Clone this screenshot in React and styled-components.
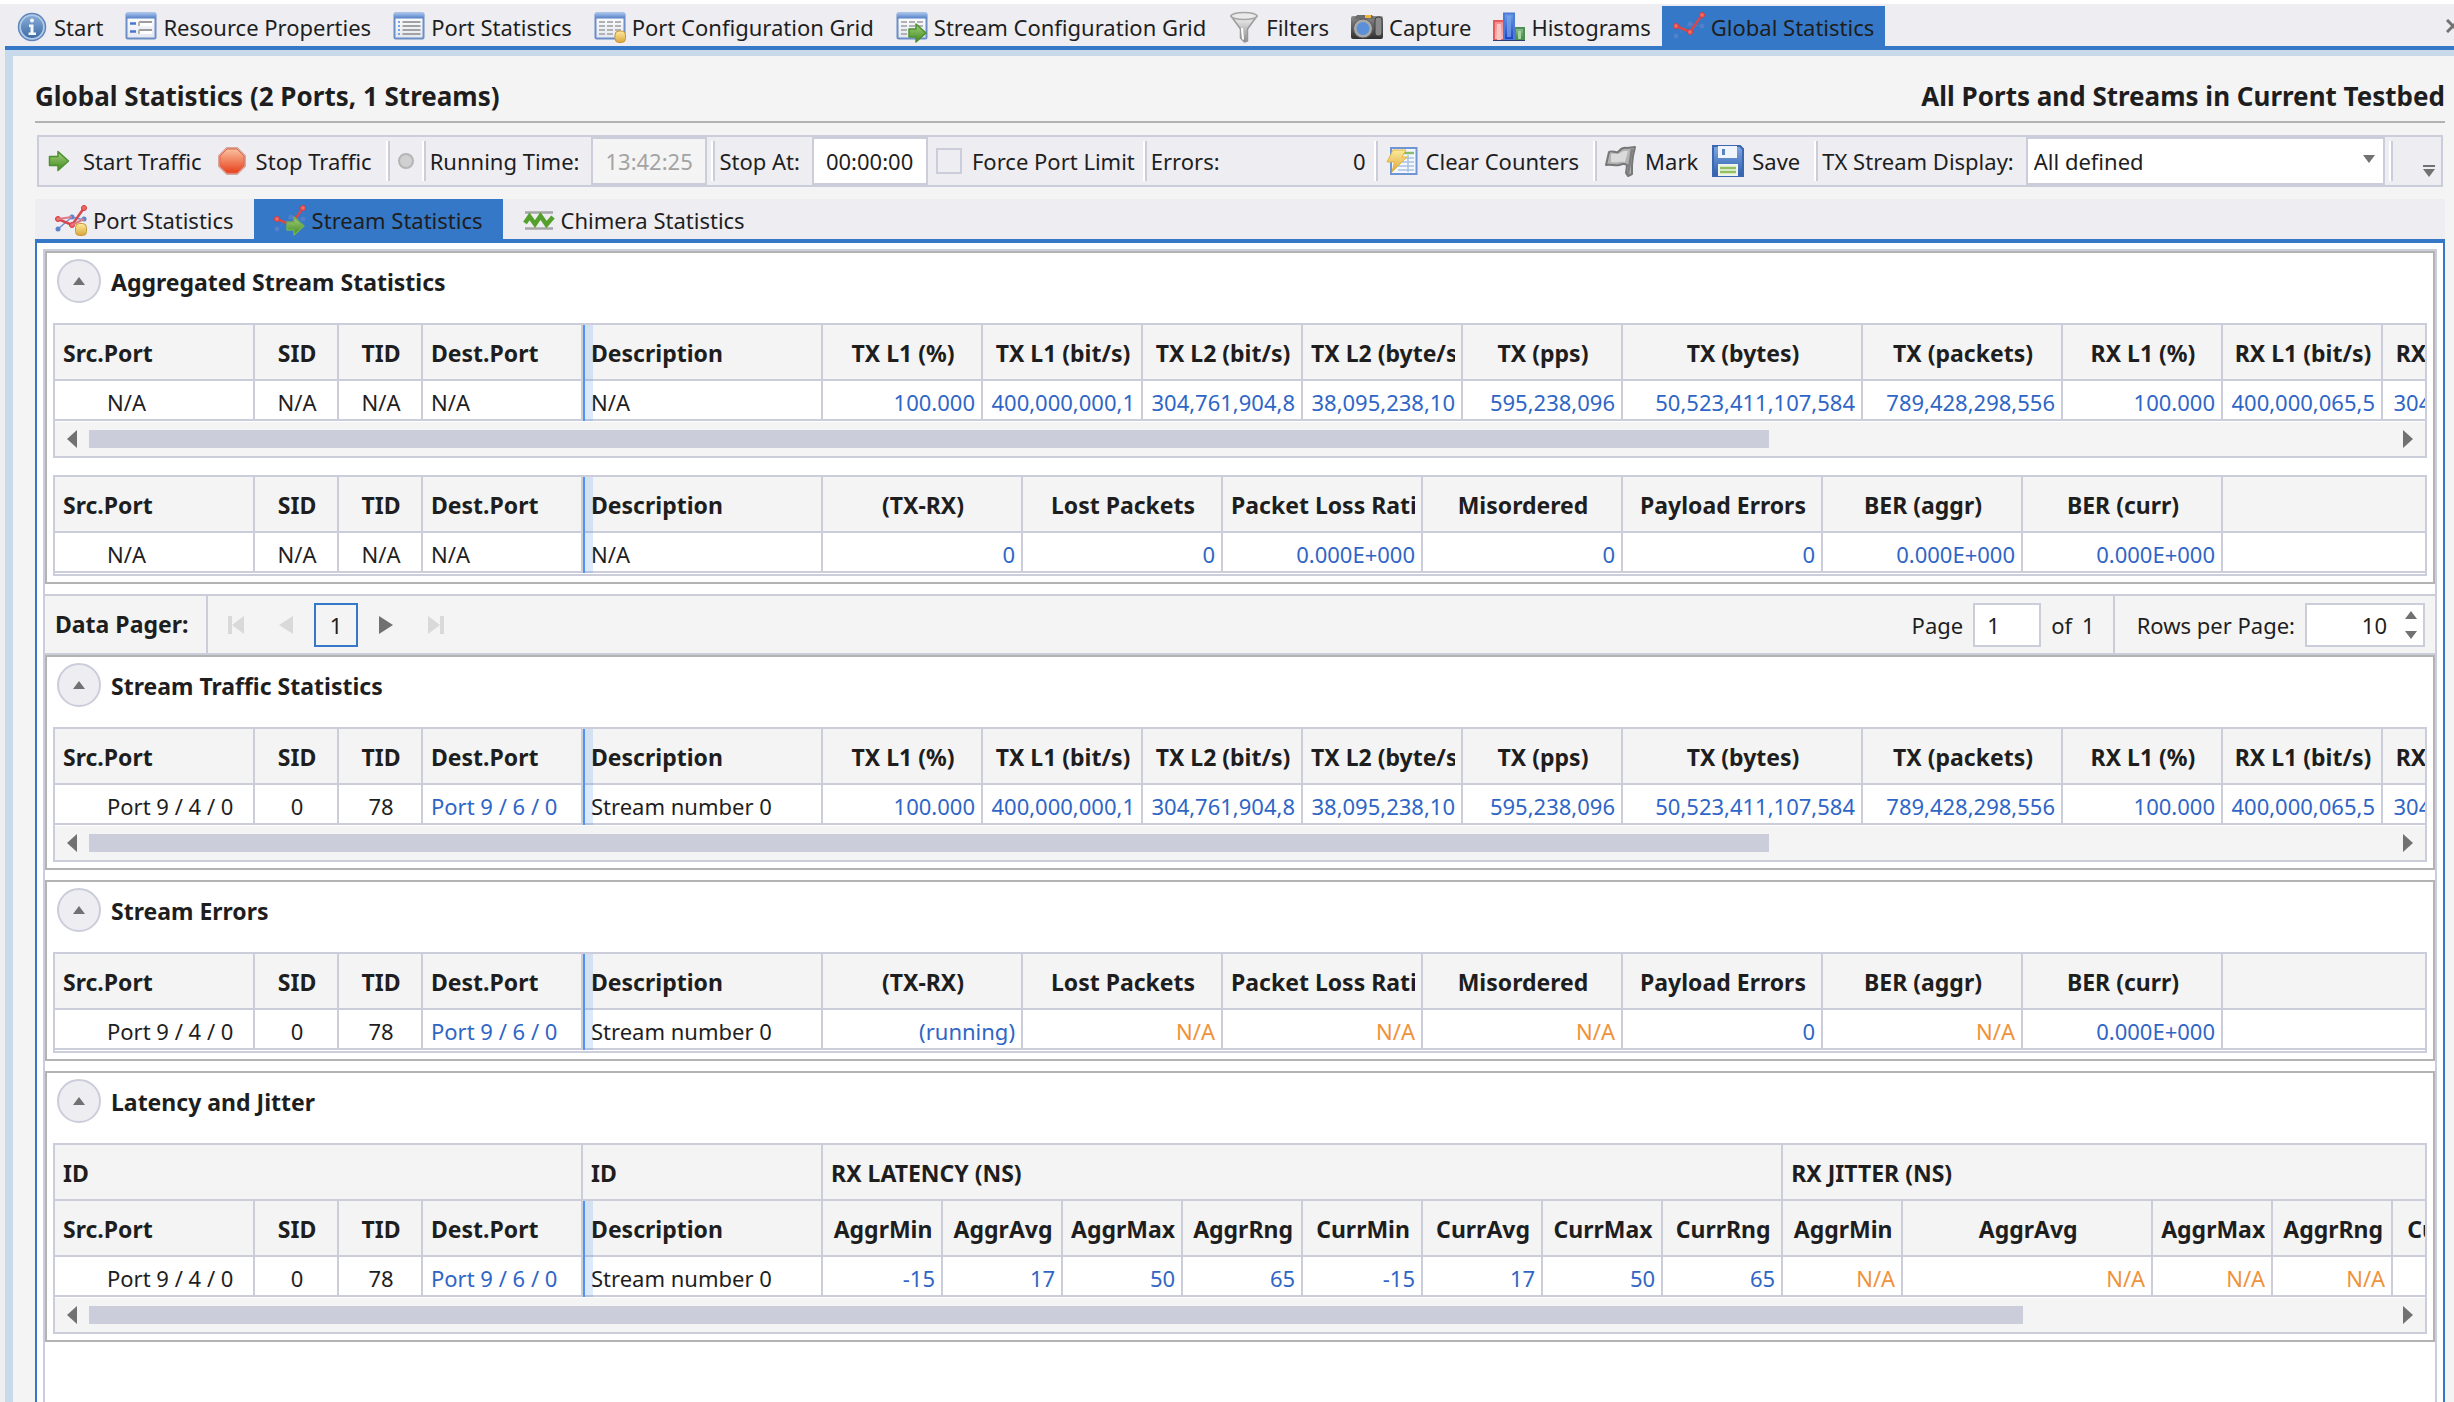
import { useRef, useState } from "react";
import styled, { createGlobalStyle } from "styled-components";

const colors = {
  accent: "#3478c7",
  frame: "#c8d9e9",
  chrome: "#ededf2",
  surface: "#f4f4f4",
  line: "#cbcdda",
  border: "#b3b3b3",
  text: "#1e1e1e",
  value: "#2f66c6",
  warning: "#f0923a",
  glyph: "#717171",
  faded: "#d9d9d9",
};

const GlobalStyle = createGlobalStyle`
  * {
    box-sizing: border-box;
  }
  body {
    margin: 0;
    background: #ffffff;
    color: ${colors.text};
    font-family: "Noto Sans", "Open Sans", sans-serif;
    font-size: 22px;
    line-height: 30px;
  }
  button, input, select {
    font: inherit;
    color: inherit;
    margin: 0;
  }
  button {
    background: none;
    border: none;
    padding: 0;
    cursor: pointer;
  }
`;

const Window = styled.div`
  height: 100vh;
  padding-top: 4px;
  display: flex;
  flex-direction: column;
  overflow: hidden;
`;

const MainTabs = styled.nav`
  background: ${colors.chrome};
  display: flex;
  align-items: flex-end;
  height: 42px;
  padding-left: 5px;
  flex: none;
  overflow: hidden;
`;

const Tab = styled.button`
  display: flex;
  align-items: center;
  gap: 6px;
  height: 40px;
  padding: 2px ${(props) => (props.$wide ? 20 : 11)}px 0;
  white-space: nowrap;
  flex: none;
  background: ${(props) => (props.$active ? colors.accent : "transparent")};
`;

const CloseTabs = styled.button`
  margin-left: auto;
  margin-right: -8px;
  width: 16px;
  height: 40px;
  flex: none;
  display: flex;
  align-items: center;
`;

const Body = styled.div`
  background: ${colors.chrome};
  padding-left: 5px;
  flex: 1;
  min-height: 0;
  display: flex;
`;

const Page = styled.main`
  flex: 1;
  min-width: 0;
  border-top: 4px solid ${colors.accent};
  display: flex;
`;

const PageInner = styled.div`
  flex: 1;
  min-width: 0;
  background: ${colors.surface};
  border-top: 6px solid ${colors.frame};
  border-left: 8px solid ${colors.frame};
  padding: 21px 9px 0 22px;
  display: flex;
  flex-direction: column;
`;

const Heading = styled.header`
  display: flex;
  justify-content: space-between;
  align-items: center;
  height: 46px;
  padding-bottom: 6px;
  border-bottom: 2px solid ${colors.border};
  flex: none;
`;

const Title = styled.h1`
  margin: 0;
  font-size: 26px;
  font-weight: 700;
`;

const Toolbar = styled.div`
  margin: 12px 2px;
  height: 52px;
  border: 2px solid ${colors.line};
  background: ${colors.chrome};
  display: flex;
  align-items: center;
  flex: none;
  white-space: nowrap;
`;

const ToolButton = styled.button`
  display: flex;
  align-items: center;
  gap: 8px;
  padding: 0 10px 0 4px;
`;

const Separator = styled.span`
  width: 4px;
  height: 40px;
  margin: 0 4px;
  flex: none;
  border-left: 2px solid #ffffff;
  border-right: 2px solid ${colors.line};
`;

const Lamp = styled.span`
  width: 16px;
  height: 16px;
  margin: 0 4px;
  border-radius: 50%;
  border: 2px solid #b5b5b5;
  background: #d0d0d0;
  flex: none;
`;

const ToolLabel = styled.label`
  padding-right: 12px;
`;

const TimeInput = styled.input`
  width: 116px;
  height: 48px;
  padding: 0 0 0 12px;
  border: 2px solid ${colors.line};
  border-radius: 0;
  background: #ffffff;
  outline: none;
  &:disabled {
    background: ${colors.surface};
    color: #a3a3a3;
  }
`;

const CheckLabel = styled.label`
  display: flex;
  align-items: center;
  gap: 10px;
  padding: 0 4px 0 8px;
`;

const CheckBox = styled.input`
  appearance: none;
  width: 26px;
  height: 26px;
  border: 2px solid ${colors.line};
  background: ${(props) => (props.checked ? colors.accent : colors.chrome)};
`;

const ErrorCount = styled.output`
  width: 150px;
  text-align: right;
  padding-right: 4px;
`;

const SelectBox = styled.div`
  position: relative;
  flex: 1;
  min-width: 0;
  svg {
    position: absolute;
    right: 10px;
    top: 18px;
    pointer-events: none;
  }
`;

const Select = styled.select`
  appearance: none;
  width: 100%;
  height: 48px;
  padding: 0 30px 0 6px;
  border: 2px solid ${colors.line};
  border-radius: 0;
  background: #ffffff;
  outline: none;
`;

const OverflowButton = styled.button`
  width: 44px;
  height: 48px;
  display: flex;
  align-items: flex-end;
  justify-content: flex-end;
  padding: 0 6px 8px 0;
  flex: none;
`;

const SubTabs = styled.nav`
  display: flex;
  background: ${colors.chrome};
  border-bottom: 4px solid ${colors.accent};
  flex: none;
`;

const Panel = styled.section`
  flex: 1;
  min-height: 0;
  background: #ffffff;
  border: 2px solid ${colors.accent};
  border-width: 0 2px;
  padding: 6px 6px 0;
  display: flex;
`;

const PanelInner = styled.div`
  flex: 1;
  min-width: 0;
  border: 2px solid ${colors.line};
  border-bottom: none;
`;

const Expander = styled.section`
  border: 2px solid ${colors.border};
  padding: 0 6px 6px;
  margin-bottom: ${(props) => (props.$last ? 0 : 10)}px;
`;

const ExpanderHeader = styled.div`
  display: flex;
  align-items: flex-start;
  gap: 10px;
  height: 70px;
  padding: 6px 0 0 4px;
  h2 {
    margin: 0;
    font-size: 23px;
    line-height: 46px;
    font-weight: 700;
  }
`;

const RoundButton = styled.button`
  width: 44px;
  height: 44px;
  border-radius: 50%;
  border: 2px solid ${colors.line};
  background: ${colors.chrome};
  display: flex;
  align-items: center;
  justify-content: center;
`;

const GridFrame = styled.div`
  border: 2px solid ${colors.line};
  & + & {
    margin-top: 17px;
  }
`;

const GridViewport = styled.div`
  overflow: hidden;
  padding-bottom: 1px;
`;

const Table = styled.table`
  table-layout: fixed;
  border-collapse: separate;
  border-spacing: 0;
  width: ${(props) => (props.$fill ? "100%" : "0")};
`;

const cell = `
  position: relative;
  border-right: 2px solid ${colors.line};
  border-bottom: 2px solid ${colors.line};
`;

const HeadCell = styled.th`
  ${cell}
  height: 56px;
  padding: 2px 6px 0 8px;
  background: ${colors.surface};
  font-size: 23px;
  font-weight: 700;
  text-align: ${(props) => props.$align || "center"};
  &:last-child {
    border-right: none;
  }
`;

const tones = { value: colors.value, warning: colors.warning };

const Cell = styled.td`
  ${cell}
  height: 40px;
  padding: 4px 6px 0 ${(props) => props.$indent || 8}px;
  background: #ffffff;
  color: ${(props) => tones[props.$tone] || colors.text};
  text-align: ${(props) => props.$align || "right"};
  &:last-child {
    border-right: none;
  }
`;

const Clip = styled.span`
  display: block;
  overflow: hidden;
  white-space: nowrap;
`;

const Splitter = styled.i`
  position: absolute;
  left: 0;
  top: 0;
  bottom: -2px;
  width: 10px;
  border-left: 2px solid #4f94f0;
  background: rgba(80, 150, 240, 0.2);
`;

const ScrollRow = styled.div`
  display: flex;
  align-items: center;
  height: 34px;
  background: ${colors.surface};
`;

const ScrollButton = styled.button`
  width: 34px;
  height: 34px;
  display: flex;
  align-items: center;
  justify-content: center;
  flex: none;
`;

const Track = styled.div`
  flex: 1;
  height: 18px;
`;

const Thumb = styled.div`
  height: 18px;
  width: ${(props) => props.$size}%;
  background: ${colors.line};
`;

const Pager = styled.div`
  display: flex;
  align-items: center;
  height: 61px;
  border: 2px solid ${colors.line};
  border-width: 2px 0;
  background: ${colors.surface};
`;

const PagerTitle = styled.strong`
  width: 163px;
  font-size: 23px;
  line-height: 57px;
  padding-left: 10px;
  border-right: 2px solid ${colors.line};
`;

const PagerButtons = styled.div`
  display: flex;
  align-items: center;
  gap: 6px;
  padding-left: 6px;
`;

const PagerButton = styled.button`
  width: 44px;
  height: 44px;
  display: flex;
  align-items: center;
  justify-content: center;
  border: 2px solid ${(props) => (props.$current ? colors.accent : "transparent")};
`;

const PageField = styled.div`
  margin-left: auto;
  display: flex;
  align-items: center;
  gap: 10px;
  height: 57px;
  padding-right: 18px;
  border-right: 2px solid ${colors.line};
`;

const PageInput = styled.input`
  width: 68px;
  height: 44px;
  padding: 0 12px;
  border: 2px solid ${colors.line};
  border-radius: 0;
  background: #ffffff;
`;

const RowsField = styled.div`
  display: flex;
  align-items: center;
  gap: 10px;
  padding: 0 10px 0 22px;
`;

const Spinner = styled.div`
  width: 120px;
  height: 44px;
  display: flex;
  border: 2px solid ${colors.line};
  background: #ffffff;
  input {
    flex: 1;
    min-width: 0;
    border: none;
    background: none;
    text-align: right;
    padding: 0 12px 0 0;
    outline: none;
  }
`;

const SpinButtons = styled.div`
  width: 24px;
  display: flex;
  flex-direction: column;
  button {
    flex: 1;
    display: flex;
    align-items: center;
    justify-content: center;
  }
`;

const Defs = styled.svg`
  position: absolute;
  width: 0;
  height: 0;
`;

const gradients = {
  blueBar: ["#a9c6ee", "#5580c6"],
  sheet: ["#ffffff", "#e3e7f0"],
  sphere: ["#87abd6", "#3d6ca8"],
  green: ["#a5cf78", "#3f8a22"],
  gold: ["#fdeb9c", "#dba63c"],
  red: ["#f9c1a0", "#e8401c"],
  steel: ["#f5f5f5", "#8a8a8a"],
  dark: ["#8b8b8b", "#2f2f2f"],
  barRed: ["#f58b8b", "#f7b9b9"],
  barBlue: ["#6f9fe4", "#1d3fc4"],
  barGreen: ["#8fc08f", "#3f8548"],
  disk: ["#7fa7e2", "#2f5fae"],
};

function IconDefs() {
  return (
    <Defs aria-hidden="true">
      <defs>
        {Object.entries(gradients).map(([id, [from, to]]) => (
          <linearGradient key={id} id={id} x1="0" y1="0" x2="0" y2="1">
            <stop offset="0" stopColor={from} />
            <stop offset="1" stopColor={to} />
          </linearGradient>
        ))}
      </defs>
    </Defs>
  );
}

function Icon({ children }) {
  return (
    <svg width="32" height="32" viewBox="0 0 32 32" aria-hidden="true">
      {children}
    </svg>
  );
}

function Triangle({ dir, width, height, color = colors.glyph }) {
  const points = {
    up: `0,${height} ${width / 2},0 ${width},${height}`,
    down: `0,0 ${width},0 ${width / 2},${height}`,
    left: `${width},0 0,${height / 2} ${width},${height}`,
    right: `0,0 ${width},${height / 2} 0,${height}`,
  };
  return (
    <svg width={width} height={height} aria-hidden="true">
      <polygon points={points[dir]} fill={color} />
    </svg>
  );
}

const arrowPath = "M13 18h7v-5l10 9-10 9v-5h-7z";

function SheetBase() {
  return (
    <>
      <rect x="1.5" y="2.5" width="29" height="25" rx="1" fill="url(#sheet)" stroke="#6d8ec6" strokeWidth="2" />
      <rect x="1" y="1.5" width="30" height="6" rx="1" fill="url(#blueBar)" />
    </>
  );
}

function InfoIcon() {
  return (
    <Icon>
      <circle cx="16" cy="16" r="13.5" fill="#b5cae4" stroke="#5c87bd" strokeWidth="1.5" />
      <circle cx="16" cy="16" r="11" fill="url(#sphere)" />
      <circle cx="16" cy="9.5" r="2" fill="#f2f6fb" />
      <path d="M13 13.5h4.5v8H20V24h-7.5v-2.500h2v-5.500H13z" fill="#f2f6fb" />
    </Icon>
  );
}

function PropertiesIcon() {
  return (
    <Icon>
      <SheetBase />
      <path d="M5 12.500h6M5 20.500h6" stroke="#4976d2" strokeWidth="2.500" />
      <path d="M14 11h13M14 19h13" stroke="#9c9c9c" strokeWidth="2" />
      <path d="M14 11v4M14 19v4" stroke="#b4b4b4" strokeWidth="2" />
      <path d="M15 12h12v3H15zM15 20h12v3H15z" fill="#ffffff" />
    </Icon>
  );
}

function ListIcon() {
  return (
    <Icon>
      <SheetBase />
      <path d="M5 11h2M5 15h2M5 19h2M5 23h2" stroke="#6fa7ec" strokeWidth="2" />
      <path d="M9.500 11h18M9.500 15h18M9.500 19h18M9.500 23h18" stroke="#a2a2a2" strokeWidth="2" />
    </Icon>
  );
}

function GridLines() {
  return (
    <path
      d="M5 11h6M13 11h6M21 11h6M5 15h6M13 15h6M21 15h6M5 19h6M13 19h6M21 19h6M5 23h6M13 23h6M21 23h6"
      stroke="#b2b2b2"
      strokeWidth="2"
    />
  );
}

function GridPortIcon() {
  return (
    <Icon>
      <SheetBase />
      <GridLines />
      <rect x="21" y="20" width="10.500" height="11.500" rx="4" fill="url(#gold)" stroke="#c9973a" />
    </Icon>
  );
}

function GridStreamIcon() {
  return (
    <Icon>
      <SheetBase />
      <GridLines />
      <path d={arrowPath} fill="url(#green)" stroke="#4c9130" strokeWidth="1.500" strokeLinejoin="round" />
    </Icon>
  );
}

function FunnelIcon() {
  return (
    <Icon>
      <path d="M3 5l9.500 13v9l4 4 3-1V18L29 5z" fill="url(#steel)" stroke="#9a9a9a" strokeWidth="1.500" strokeLinejoin="round" />
      <ellipse cx="16" cy="5" rx="13" ry="3.500" fill="#e9e9e9" stroke="#a5a5a5" strokeWidth="1.500" />
      <path d="M13 17l1 11 2 1-1-12z" fill="#ffffff" />
    </Icon>
  );
}

function CameraIcon() {
  return (
    <Icon>
      <rect x="0" y="5" width="32" height="23" rx="2" fill="url(#dark)" />
      <path d="M3 8l3-4h15l3 4z" fill="#6c6c6c" />
      <rect x="14" y="4" width="6" height="3" fill="#f0b63e" />
      <rect x="24" y="6" width="7" height="19" rx="3" fill="#8a8a8a" stroke="#3f3f3f" />
      <circle cx="12" cy="17.500" r="9.500" fill="#a9a9a9" stroke="#5b5b5b" />
      <circle cx="12" cy="17.500" r="6.500" fill="#5b90d8" />
    </Icon>
  );
}

function HistogramIcon() {
  return (
    <Icon>
      <rect x="1" y="10" width="10" height="19" fill="url(#barRed)" stroke="#e85a5a" strokeWidth="2" />
      <rect x="4" y="13" width="4" height="16" fill="#f9c4c4" />
      <rect x="22" y="17" width="9" height="12" fill="url(#barGreen)" stroke="#4d8f55" strokeWidth="2" />
      <rect x="25" y="20" width="3" height="8" fill="#a9d3a0" />
      <rect x="11" y="2.500" width="10" height="26.500" fill="url(#barBlue)" stroke="#4d7cd8" strokeWidth="2" />
      <rect x="14" y="5" width="4" height="21" fill="#7ba6ec" opacity="0.7" />
      <path d="M0 29.500h32" stroke="#2a3f70" strokeWidth="1" />
    </Icon>
  );
}

function ChartLines({ faded }) {
  return (
    <>
      <path
        d="M3 25L17 13l12 3"
        stroke="#6d8fd4"
        strokeWidth="1.500"
        strokeDasharray={faded ? "2 3" : "none"}
        opacity={faded ? 0.4 : 1}
        fill="none"
      />
      <g fill="#5f83cb" opacity={faded ? 0.7 : 1}>
        <circle cx="3" cy="25" r="2.500" />
        <circle cx="17" cy="13" r="2.500" />
        <circle cx="29" cy="15" r="2.500" />
      </g>
      <path d="M3 15l14 6L29 4" stroke="#d5484e" strokeWidth="2.500" fill="none" />
      <g fill="#ee6a63" stroke="#d9363c">
        <circle cx="3" cy="15" r="2.500" />
        <circle cx="17" cy="21" r="2.500" />
        <circle cx="29" cy="4" r="2.500" />
      </g>
    </>
  );
}

function ChartIcon() {
  return (
    <Icon>
      <ChartLines faded />
    </Icon>
  );
}

function ChartPortIcon() {
  return (
    <Icon>
      <ChartLines />
      <path d="M3 15l14-2M17 21l12-6" stroke="#e07a86" strokeWidth="2" />
      <rect x="20.500" y="19.500" width="11" height="12" rx="4" fill="url(#gold)" stroke="#c9973a" />
    </Icon>
  );
}

function ChartStreamIcon() {
  return (
    <Icon>
      <ChartLines faded />
      <path d={arrowPath} fill="url(#green)" stroke="#6fae55" strokeWidth="1.500" strokeLinejoin="round" />
    </Icon>
  );
}

function WaveIcon() {
  return (
    <Icon>
      <path d="M2 8.500h28M2 24.500h28" stroke="#a6a6a6" strokeWidth="2.500" />
      <path d="M2 19l4.500-6.500L12 20l5.500-8 6 8.500L30 13" stroke="#55a02c" strokeWidth="4.500" fill="none" />
    </Icon>
  );
}

function StartIcon() {
  return (
    <Icon>
      <path d="M6.500 11.500H15v-5l10.500 9.500L15 25.500v-5H6.500z" fill="url(#green)" stroke="#4c9130" strokeWidth="1.500" strokeLinejoin="round" />
    </Icon>
  );
}

function StopIcon() {
  return (
    <Icon>
      <path d="M10.500 2h11L30 10.500v11L21.500 30h-11L2 21.500v-11z" fill="#d8a79b" />
      <path d="M11 4h10l7 7v10l-7 7H11l-7-7V11z" fill="url(#red)" stroke="#e2654a" />
    </Icon>
  );
}

function ClearIcon() {
  return (
    <Icon>
      <rect x="5" y="3" width="25.500" height="26" fill="#f4f8fe" stroke="#6f95d4" strokeWidth="2" />
      <path d="M17 8h11" stroke="#84bd6c" strokeWidth="2.500" />
      <path d="M14 13h14M14 17h14M12 21h16M12 25h16M22 10v17" stroke="#a9c1e4" strokeWidth="1.500" />
      <path d="M7 5h13l-4 7h5L6 27l2.500-10H1z" fill="url(#gold)" stroke="#e0b440" strokeWidth="1" strokeLinejoin="round" />
    </Icon>
  );
}

function FlagIcon() {
  return (
    <Icon>
      <path d="M4 7c3-2 6 1 9 0 3-3 5-5 9-4l8-1-2 9-1 9 0 9-4 2-2-3 1-8c-3-2-5-1-8 0-4 1-8-1-13 0z" fill="#b4b4b4" stroke="#777777" strokeWidth="2" strokeLinejoin="round" />
      <path d="M6 9c4-1 6 1 9-1s4-2 8-2l-3 11c-4-1-9 1-14 0z" fill="#dadada" />
      <path d="M27 4l-4 25" stroke="#808080" strokeWidth="2.500" />
    </Icon>
  );
}

function SaveIcon() {
  return (
    <Icon>
      <path d="M1 1h27l3 3v27H1z" fill="url(#disk)" stroke="#3b66b0" strokeWidth="2" />
      <rect x="6" y="1" width="19" height="12" fill="#f0f4fb" />
      <rect x="10" y="4" width="3" height="6" fill="#5b82c2" />
      <rect x="6" y="19" width="20" height="12" fill="#eef5e6" />
      <path d="M8 23h16M8 27h16" stroke="#93c162" strokeWidth="2.500" />
    </Icon>
  );
}

const mainTabs = [
  ["Start", InfoIcon],
  ["Resource Properties", PropertiesIcon],
  ["Port Statistics", ListIcon],
  ["Port Configuration Grid", GridPortIcon],
  ["Stream Configuration Grid", GridStreamIcon],
  ["Filters", FunnelIcon],
  ["Capture", CameraIcon],
  ["Histograms", HistogramIcon],
  ["Global Statistics", ChartIcon],
];

const subTabs = [
  ["Port Statistics", ChartPortIcon],
  ["Stream Statistics", ChartStreamIcon],
  ["Chimera Statistics", WaveIcon],
];

const idColumns = [
  { label: "Src.Port", width: 200, head: "left", align: "left", indent: 52 },
  { label: "SID", width: 84, align: "center" },
  { label: "TID", width: 84, align: "center" },
  { label: "Dest.Port", width: 160, head: "left", align: "left" },
  { label: "Description", width: 240, head: "left", align: "left", split: true },
];

const trafficColumns = [
  ...idColumns,
  { label: "TX L1 (%)", width: 160 },
  { label: "TX L1 (bit/s)", width: 160 },
  { label: "TX L2 (bit/s)", width: 160 },
  { label: "TX L2 (byte/s)", width: 160 },
  { label: "TX (pps)", width: 160 },
  { label: "TX (bytes)", width: 240 },
  { label: "TX (packets)", width: 200 },
  { label: "RX L1 (%)", width: 160 },
  { label: "RX L1 (bit/s)", width: 160 },
  { label: "RX L2 (bit/s)", width: 160 },
];

const errorColumns = [
  ...idColumns,
  { label: "(TX-RX)", width: 200 },
  { label: "Lost Packets", width: 200 },
  { label: "Packet Loss Ratio", width: 200 },
  { label: "Misordered", width: 200 },
  { label: "Payload Errors", width: 200 },
  { label: "BER (aggr)", width: 200 },
  { label: "BER (curr)", width: 200 },
  { label: "" },
];

const latencyColumns = [
  ...idColumns,
  { label: "AggrMin", width: 120 },
  { label: "AggrAvg", width: 120 },
  { label: "AggrMax", width: 120 },
  { label: "AggrRng", width: 120 },
  { label: "CurrMin", width: 120 },
  { label: "CurrAvg", width: 120 },
  { label: "CurrMax", width: 120 },
  { label: "CurrRng", width: 120 },
  { label: "AggrMin", width: 120 },
  { label: "AggrAvg", width: 250 },
  { label: "AggrMax", width: 120 },
  { label: "AggrRng", width: 120 },
  { label: "CurrMin", width: 120 },
];

const latencyGroups = [
  { label: "ID", span: 4 },
  { label: "ID", span: 1 },
  { label: "RX LATENCY (NS)", span: 8 },
  { label: "RX JITTER (NS)", span: 5 },
];

const noIds = ["N/A", "N/A", "N/A", "N/A", "N/A"];
const streamIds = ["Port 9 / 4 / 0", "0", "78", "Port 9 / 6 / 0", "Stream number 0"];
const traffic = [
  "100.000",
  "400,000,000,1",
  "304,761,904,8",
  "38,095,238,10",
  "595,238,096",
  "50,523,411,107,584",
  "789,428,298,556",
  "100.000",
  "400,000,065,5",
  "304,761,954,6",
];

function toneOf(text, index) {
  if (index < 5) {
    return index === 3 && text !== "N/A" ? "value" : "plain";
  }
  return text === "N/A" ? "warning" : "value";
}

function DataGrid({ columns, groups, row, thumb }) {
  const viewport = useRef(null);
  const scroll = (amount) => viewport.current.scrollBy({ left: amount });

  return (
    <GridFrame>
      <GridViewport ref={viewport}>
        <Table $fill={!thumb}>
          <colgroup>
            {columns.map((column, i) => (
              <col key={i} width={column.width} />
            ))}
          </colgroup>
          <thead>
            {groups && (
              <tr>
                {groups.map((group, i) => (
                  <HeadCell key={i} colSpan={group.span} $align="left">
                    <Clip>{group.label}</Clip>
                  </HeadCell>
                ))}
              </tr>
            )}
            <tr>
              {columns.map((column, i) => (
                <HeadCell key={i} $align={column.head}>
                  {column.split && <Splitter />}
                  <Clip>{column.label}</Clip>
                </HeadCell>
              ))}
            </tr>
          </thead>
          <tbody>
            <tr>
              {columns.map((column, i) => (
                <Cell
                  key={i}
                  $align={column.align}
                  $indent={column.indent}
                  $tone={toneOf(row[i], i)}
                >
                  {column.split && <Splitter />}
                  <Clip>{row[i]}</Clip>
                </Cell>
              ))}
            </tr>
          </tbody>
        </Table>
      </GridViewport>
      {thumb && (
        <ScrollRow>
          <ScrollButton aria-label="Scroll left" onClick={() => scroll(-160)}>
            <Triangle dir="left" width={10} height={18} />
          </ScrollButton>
          <Track>
            <Thumb $size={thumb} />
          </Track>
          <ScrollButton aria-label="Scroll right" onClick={() => scroll(160)}>
            <Triangle dir="right" width={10} height={18} />
          </ScrollButton>
        </ScrollRow>
      )}
    </GridFrame>
  );
}

function Section({ title, last, children }) {
  const [isOpen, setIsOpen] = useState(true);

  return (
    <Expander $last={last}>
      <ExpanderHeader>
        <RoundButton
          aria-label={`Toggle ${title}`}
          aria-expanded={isOpen}
          onClick={() => setIsOpen((open) => !open)}
        >
          <Triangle dir={isOpen ? "up" : "down"} width={12} height={8} />
        </RoundButton>
        <h2>{title}</h2>
      </ExpanderHeader>
      {isOpen && children}
    </Expander>
  );
}

function EdgeArrow({ dir }) {
  return (
    <svg width="16" height="18" aria-hidden="true" fill={colors.faded}>
      {dir === "first" ? (
        <path d="M0 0h4v18H0zM16 0v18L4 9z" />
      ) : (
        <path d="M12 0h4v18h-4zM0 0v18l12-9z" />
      )}
    </svg>
  );
}

function DataPager() {
  const [page, setPage] = useState("1");
  const [rows, setRows] = useState(10);

  return (
    <Pager>
      <PagerTitle>Data Pager:</PagerTitle>
      <PagerButtons>
        <PagerButton aria-label="First page">
          <EdgeArrow dir="first" />
        </PagerButton>
        <PagerButton aria-label="Previous page">
          <Triangle dir="left" width={14} height={18} color={colors.faded} />
        </PagerButton>
        <PagerButton $current>1</PagerButton>
        <PagerButton aria-label="Next page">
          <Triangle dir="right" width={14} height={18} />
        </PagerButton>
        <PagerButton aria-label="Last page">
          <EdgeArrow dir="last" />
        </PagerButton>
      </PagerButtons>
      <PageField>
        <label htmlFor="page">Page</label>
        <PageInput id="page" value={page} onChange={(e) => setPage(e.target.value)} />
        <span>of</span>
        <span>1</span>
      </PageField>
      <RowsField>
        <label htmlFor="rows">Rows per Page:</label>
        <Spinner>
          <input id="rows" value={rows} onChange={(e) => setRows(Number(e.target.value) || 0)} />
          <SpinButtons>
            <button aria-label="More rows" onClick={() => setRows(rows + 1)}>
              <Triangle dir="up" width={12} height={8} />
            </button>
            <button aria-label="Fewer rows" onClick={() => setRows(rows - 1)}>
              <Triangle dir="down" width={12} height={8} />
            </button>
          </SpinButtons>
        </Spinner>
      </RowsField>
    </Pager>
  );
}

function TrafficToolbar() {
  const [stopAt, setStopAt] = useState("00:00:00");
  const [limit, setLimit] = useState(false);

  return (
    <Toolbar>
      <ToolButton>
        <StartIcon />
        Start Traffic
      </ToolButton>
      <ToolButton>
        <StopIcon />
        Stop Traffic
      </ToolButton>
      <Separator />
      <Lamp />
      <Separator />
      <ToolLabel htmlFor="running">Running Time:</ToolLabel>
      <TimeInput id="running" value="13:42:25" disabled readOnly />
      <Separator />
      <ToolLabel htmlFor="stop">Stop At:</ToolLabel>
      <TimeInput id="stop" value={stopAt} onChange={(e) => setStopAt(e.target.value)} />
      <CheckLabel>
        <CheckBox type="checkbox" checked={limit} onChange={(e) => setLimit(e.target.checked)} />
        Force Port Limit
      </CheckLabel>
      <Separator />
      <label htmlFor="errors">Errors:</label>
      <ErrorCount id="errors">0</ErrorCount>
      <Separator />
      <ToolButton>
        <ClearIcon />
        Clear Counters
      </ToolButton>
      <Separator />
      <ToolButton>
        <FlagIcon />
        Mark
      </ToolButton>
      <ToolButton>
        <SaveIcon />
        Save
      </ToolButton>
      <Separator />
      <ToolLabel htmlFor="display">TX Stream Display:</ToolLabel>
      <SelectBox>
        <Select id="display">
          <option>All defined</option>
        </Select>
        <Triangle dir="down" width={12} height={8} />
      </SelectBox>
      <Separator />
      <OverflowButton aria-label="More tools">
        <svg width="12" height="12" fill={colors.glyph} aria-hidden="true">
          <path d="M0 0h12v2H0zM0 4h12l-6 8z" />
        </svg>
      </OverflowButton>
    </Toolbar>
  );
}

function App() {
  const [mainTab, setMainTab] = useState(8);
  const [subTab, setSubTab] = useState(1);

  return (
    <Window>
      <GlobalStyle />
      <IconDefs />
      <MainTabs>
        {mainTabs.map(([label, TabIcon], i) => (
          <Tab key={label} $active={i === mainTab} onClick={() => setMainTab(i)}>
            <TabIcon />
            {label}
          </Tab>
        ))}
        <CloseTabs aria-label="Close">
          <svg width="14" height="14" aria-hidden="true">
            <path d="M1 1l12 12M13 1L1 13" stroke={colors.glyph} strokeWidth="3" />
          </svg>
        </CloseTabs>
      </MainTabs>
      <Body>
        <Page>
          <PageInner>
            <Heading>
              <Title>Global Statistics (2 Ports, 1 Streams)</Title>
              <Title as="h2">All Ports and Streams in Current Testbed</Title>
            </Heading>
            <TrafficToolbar />
            <SubTabs>
              {subTabs.map(([label, TabIcon], i) => (
                <Tab key={label} $wide $active={i === subTab} onClick={() => setSubTab(i)}>
                  <TabIcon />
                  {label}
                </Tab>
              ))}
            </SubTabs>
            <Panel>
              <PanelInner>
                <Section title="Aggregated Stream Statistics">
                  <DataGrid columns={trafficColumns} row={[...noIds, ...traffic]} thumb={73} />
                  <DataGrid
                    columns={errorColumns}
                    row={[...noIds, "0", "0", "0.000E+000", "0", "0", "0.000E+000", "0.000E+000", ""]}
                  />
                </Section>
                <DataPager />
                <Section title="Stream Traffic Statistics">
                  <DataGrid columns={trafficColumns} row={[...streamIds, ...traffic]} thumb={73} />
                </Section>
                <Section title="Stream Errors">
                  <DataGrid
                    columns={errorColumns}
                    row={[...streamIds, "(running)", "N/A", "N/A", "N/A", "0", "N/A", "0.000E+000", ""]}
                  />
                </Section>
                <Section title="Latency and Jitter" last>
                  <DataGrid
                    columns={latencyColumns}
                    groups={latencyGroups}
                    row={[
                      ...streamIds,
                      "-15", "17", "50", "65", "-15", "17", "50", "65",
                      "N/A", "N/A", "N/A", "N/A", "N/A",
                    ]}
                    thumb={84}
                  />
                </Section>
              </PanelInner>
            </Panel>
          </PageInner>
        </Page>
      </Body>
    </Window>
  );
}

export default App;
